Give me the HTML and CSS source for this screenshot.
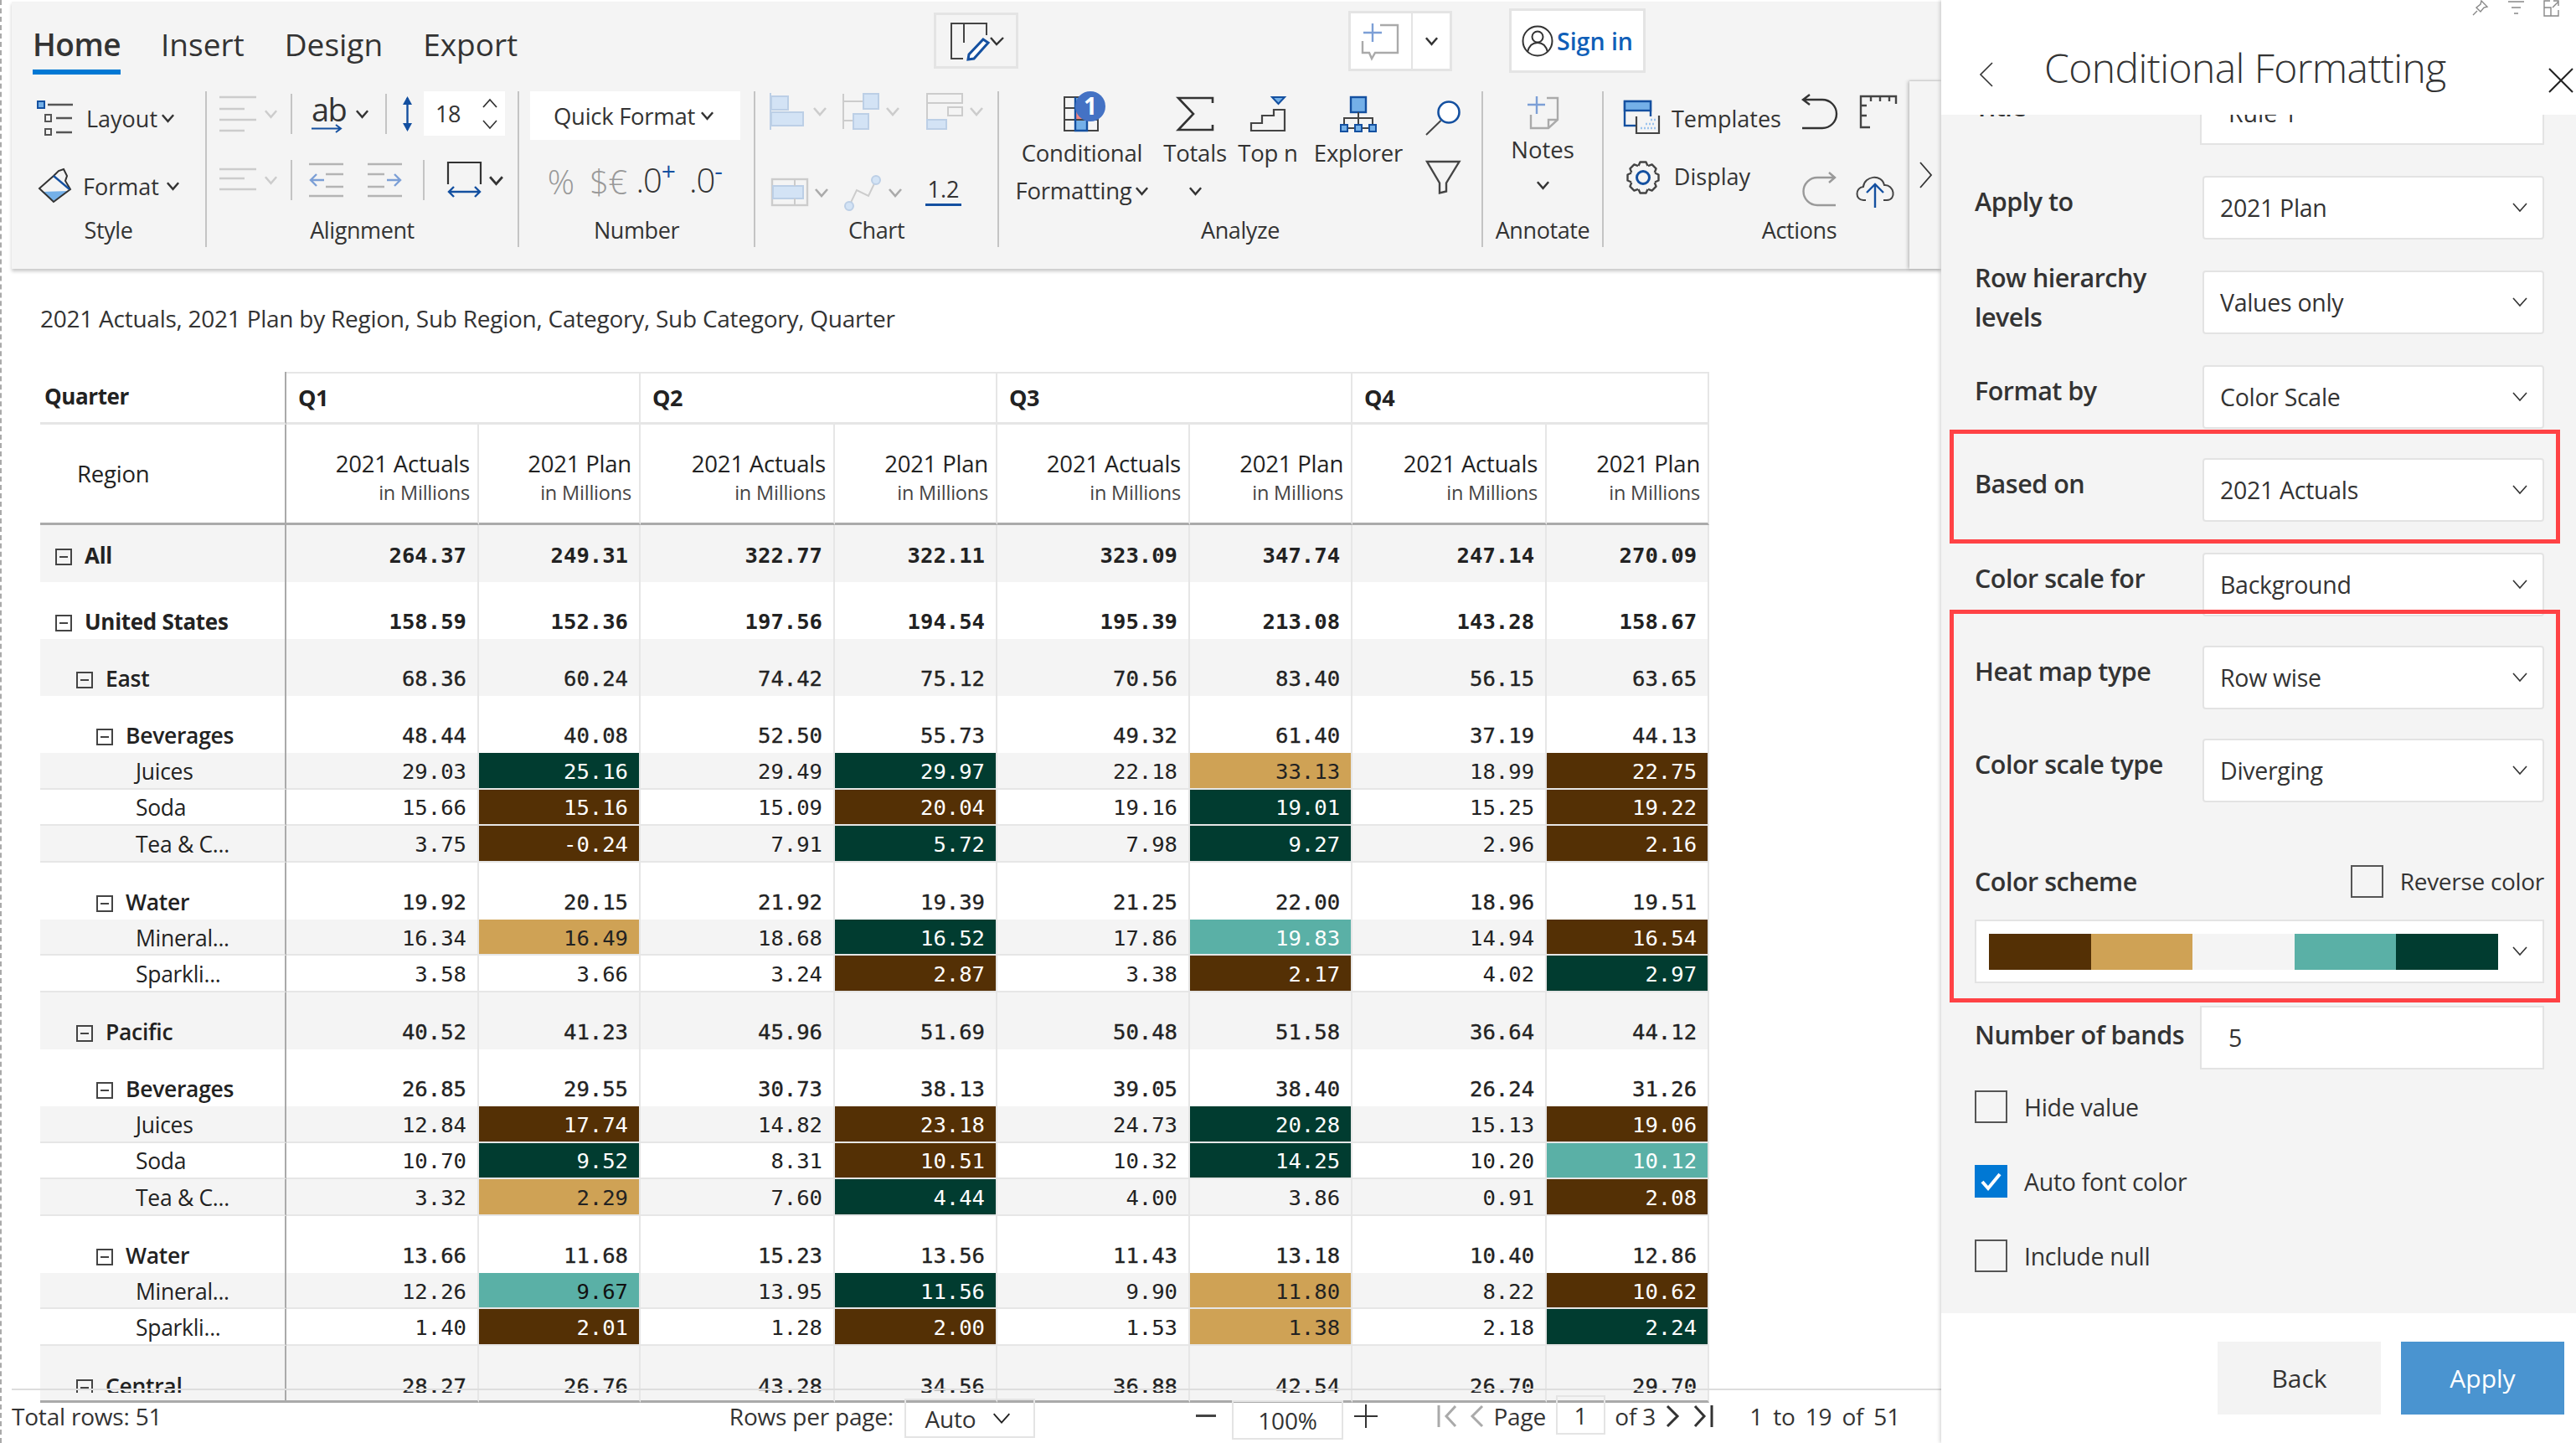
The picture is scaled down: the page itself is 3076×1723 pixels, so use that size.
FILE: index.html
```html
<!DOCTYPE html>
<html lang="en">
<head>
    <meta charset="UTF-8">
    <title>Conditional Formatting</title>
    <link rel="stylesheet" href="styles.css">
</head>
<body>
    <svg class="defs" width="0" height="0">
        <symbol id="chev" viewBox="0 0 18 12"><polyline points="2,2 9,10 16,2" fill="none" stroke="currentColor" stroke-width="2.6"/></symbol>
        <symbol id="chev-thin" viewBox="0 0 18 12"><polyline points="1,1 9,10 17,1" fill="none" stroke="currentColor" stroke-width="1.6"/></symbol>
        <symbol id="gear" viewBox="0 0 40 40">
            <g fill="none" stroke="#444" stroke-width="2.4" stroke-linejoin="round" transform="translate(20 20)">
                <polyline id="tooth" points="-5.5,-14 -3.5,-18.5 3.5,-18.5 5.5,-14"/>
                <use href="#tooth" transform="rotate(45)"/><use href="#tooth" transform="rotate(90)"/><use href="#tooth" transform="rotate(135)"/>
                <use href="#tooth" transform="rotate(180)"/><use href="#tooth" transform="rotate(225)"/><use href="#tooth" transform="rotate(270)"/><use href="#tooth" transform="rotate(315)"/>
            </g>
            <circle cx="20" cy="20" r="7.5" fill="none" stroke="#1450a0" stroke-width="3"/>
        </symbol>
    </svg>

    <div class="main">
        <div class="ribbon">
            <div class="tab-row">
                <div class="tabs">
                    <div class="tab active">Home</div>
                    <div class="tab">Insert</div>
                    <div class="tab">Design</div>
                    <div class="tab">Export</div>
                </div>
                <div class="top-box edit-box">
                    <svg width="64" height="44" viewBox="0 0 64 44">
                        <path d="M15 43H1V1H43V15M16 1V24" fill="none" stroke="#444" stroke-width="2"/>
                        <path d="M39 20L45 24L28 43L21 44L22 38Z" fill="#fff" stroke="#1450a0" stroke-width="3"/>
                        <polyline points="48,18 55,26 63,18" fill="none" stroke="#333" stroke-width="2.4"/>
                    </svg>
                </div>
                <div class="top-box note-box">
                    <div class="note-icon">
                        <svg width="46" height="44" viewBox="0 0 46 44">
                            <path d="M22 3H43V36H16L12 43L9 36H1V22" fill="none" stroke="#aaa" stroke-width="2.4"/>
                            <path d="M2 12H24M13 1V23" fill="none" stroke="#7c9fd6" stroke-width="2.4"/>
                        </svg>
                    </div>
                    <div class="note-more"><svg class="chev" width="17" height="12"><use href="#chev"/></svg></div>
                </div>
                <div class="top-box sign-box">
                    <svg width="38" height="40" viewBox="0 0 38 40">
                        <circle cx="19" cy="20" r="17.5" fill="none" stroke="#333" stroke-width="2"/>
                        <circle cx="19" cy="15" r="6.5" fill="none" stroke="#333" stroke-width="2"/>
                        <path d="M7 33C9 25 14 22 19 22C24 22 29 25 31 33" fill="none" stroke="#333" stroke-width="2"/>
                    </svg>
                    <span>Sign in</span>
                </div>
            </div>

            <div class="groups">
                <div class="group style-group">
                    <div class="group-body">
                        <div class="tool-line">
                            <svg width="44" height="42" viewBox="0 0 44 42">
                                <rect x="1" y="1" width="8" height="8" fill="#74b0e8" stroke="#1450a0" stroke-width="2"/>
                                <rect x="10" y="17" width="7" height="8" fill="none" stroke="#555" stroke-width="2"/>
                                <rect x="10" y="34" width="7" height="7" fill="none" stroke="#555" stroke-width="2"/>
                                <path d="M13 5H43M23 21H42M23 38H42" stroke="#555" stroke-width="2.4"/>
                            </svg>
                            <span class="tool-text">Layout</span>
                            <svg class="chev" width="17" height="12"><use href="#chev"/></svg>
                        </div>
                        <div class="tool-line format-line">
                            <svg width="40" height="40" viewBox="0 0 40 40">
                                <polygon points="4,27 36,26 18,38" fill="#74b0e8"/>
                                <polygon points="1,23 18,8 24,2 30,0 34,8 32,14 38,24 18,39" fill="none" stroke="#333" stroke-width="2"/>
                                <path d="M18 8L37 24" stroke="#1450a0" stroke-width="2.4"/>
                            </svg>
                            <span class="tool-text">Format</span>
                            <svg class="chev" width="17" height="12"><use href="#chev"/></svg>
                        </div>
                    </div>
                    <div class="group-label">Style</div>
                </div>

                <div class="group align-group">
                    <div class="group-body">
                        <div class="tracks align-top">
                            <svg width="44" height="44" viewBox="0 0 44 44"><path d="M0 2H44M0 16H30M0 29H44M0 42H30" stroke="#ccc" stroke-width="2.6"/></svg>
                            <svg class="chev off" width="17" height="12"><use href="#chev"/></svg>
                            <i class="vsep"></i>
                            <div class="ab-tool"><span>ab</span><svg width="36" height="9" viewBox="0 0 36 9"><path d="M0 4.5H34M29 0L35 4.5L29 9" fill="none" stroke="#1450a0" stroke-width="2"/></svg></div>
                            <svg class="chev" width="17" height="12"><use href="#chev"/></svg>
                            <i class="vsep"></i>
                            <svg width="13" height="42" viewBox="0 0 13 42"><path d="M6.5 2V40" stroke="#1450a0" stroke-width="2.4"/><path d="M6.5 0L12 10H1ZM6.5 42L12 32H1Z" fill="#1450a0"/></svg>
                            <div class="spin">
                                <span>18</span>
                                <div class="spin-arrows">
                                    <svg width="20" height="12" viewBox="0 0 18 12"><polyline points="1,11 9,2 17,11" fill="none" stroke="#333" stroke-width="1.8"/></svg>
                                    <svg width="20" height="12"><use href="#chev-thin" color="#333"/></svg>
                                </div>
                            </div>
                        </div>
                        <div class="tracks align-bottom">
                            <svg width="44" height="30" viewBox="0 0 44 30"><path d="M0 2H44M0 13H30M0 26H44" stroke="#ccc" stroke-width="2.6"/></svg>
                            <svg class="chev off" width="17" height="12"><use href="#chev"/></svg>
                            <i class="vsep"></i>
                            <svg width="41" height="42" viewBox="0 0 41 42"><path d="M0 2H41M0 40H41M20 14H41M20 29H41" stroke="#b4b4b4" stroke-width="2.6"/><path d="M2 21H18M9 14L2 21L9 28" fill="none" stroke="#7c9fd6" stroke-width="2.4"/></svg>
                            <svg width="41" height="42" viewBox="0 0 41 42"><path d="M0 2H41M0 40H41M0 14H20M0 29H20" stroke="#b4b4b4" stroke-width="2.6"/><path d="M23 21H39M32 14L39 21L32 28" fill="none" stroke="#7c9fd6" stroke-width="2.4"/></svg>
                            <i class="vsep"></i>
                            <svg width="41" height="44" viewBox="0 0 41 44"><path d="M1 27V1H40V27" fill="none" stroke="#333" stroke-width="2.2"/><path d="M2 36H39M8 30L2 36L8 42M33 30L39 36L33 42" fill="none" stroke="#1450a0" stroke-width="2.4"/></svg>
                            <svg class="chev" width="19" height="13"><use href="#chev"/></svg>
                        </div>
                    </div>
                    <div class="group-label">Alignment</div>
                </div>

                <div class="group number-group">
                    <div class="group-body">
                        <div class="quick-format"><span>Quick Format</span><svg class="chev" width="17" height="12"><use href="#chev"/></svg></div>
                        <div class="tracks number-tools">
                            <span class="num-off">%</span>
                            <span class="num-off">$€</span>
                            <span class="num-dec">.0<b>+</b></span>
                            <span class="num-dec">.0<b>-</b></span>
                        </div>
                    </div>
                    <div class="group-label number-label">Number</div>
                </div>

                <div class="group chart-group">
                    <div class="group-body">
                        <div class="tracks chart-top">
                            <svg width="41" height="44" viewBox="0 0 41 44"><path d="M1 0V44" stroke="#bccfe6" stroke-width="2"/><rect x="2" y="4" width="20" height="16" fill="#d3e3f5" stroke="#bccfe6" stroke-width="2"/><rect x="2" y="23" width="38" height="16" fill="#d3e3f5" stroke="#bccfe6" stroke-width="2"/></svg>
                            <svg class="chev off" width="18" height="12"><use href="#chev"/></svg>
                            <svg width="44" height="44" viewBox="0 0 44 44"><path d="M1 1V43M1 10H25M1 33H13" stroke="#ccc" stroke-width="2"/><rect x="25" y="1" width="18" height="18" fill="#d3e3f5" stroke="#bccfe6" stroke-width="2"/><rect x="13" y="25" width="18" height="18" fill="#d3e3f5" stroke="#bccfe6" stroke-width="2"/></svg>
                            <svg class="chev off" width="18" height="12"><use href="#chev"/></svg>
                            <svg width="44" height="44" viewBox="0 0 44 44"><rect x="1" y="1" width="42" height="11" fill="none" stroke="#ccc" stroke-width="2"/><path d="M1 12V33" stroke="#ccc" stroke-width="2"/><rect x="26" y="17" width="17" height="10" fill="none" stroke="#ccc" stroke-width="2"/><rect x="1" y="32" width="23" height="11" fill="#d3e3f5" stroke="#bccfe6" stroke-width="2"/></svg>
                            <svg class="chev off" width="18" height="12"><use href="#chev"/></svg>
                        </div>
                        <div class="tracks chart-bottom">
                            <svg width="44" height="44" viewBox="0 0 44 44"><rect x="1" y="6" width="42" height="31" fill="none" stroke="#ccc" stroke-width="2.4"/><rect x="2" y="14" width="36" height="15" fill="#d3e3f5" stroke="#bccfe6" stroke-width="2"/><path d="M28 6V14M28 29V37" stroke="#ccc" stroke-width="2"/></svg>
                            <svg class="chev grey" width="18" height="12"><use href="#chev"/></svg>
                            <svg width="44" height="44" viewBox="0 0 44 44"><polyline points="6,38 15,19 29,26 38,7" fill="none" stroke="#ccc" stroke-width="2"/><circle cx="6" cy="38" r="5" fill="#d3e3f5" stroke="#bccfe6" stroke-width="2"/><circle cx="38" cy="7" r="5" fill="#d3e3f5" stroke="#bccfe6" stroke-width="2"/></svg>
                            <svg class="chev grey" width="18" height="12"><use href="#chev"/></svg>
                            <span class="decimal">1.2</span>
                        </div>
                    </div>
                    <div class="group-label">Chart</div>
                </div>

                <div class="group analyze-group">
                    <div class="group-body analyze-tools">
                        <div class="big-tool">
                            <svg class="tool-icon" width="44" height="43" viewBox="0 0 44 43">
                                <rect x="14" y="1" width="14" height="13" fill="#74b0e8"/>
                                <rect x="14" y="14" width="14" height="14" fill="#f08484"/>
                                <rect x="14" y="28" width="14" height="13" fill="#74b0e8"/>
                                <path d="M1 1H41V41H1ZM1 14H41M1 28H41" fill="none" stroke="#444" stroke-width="2"/>
                                <path d="M14 1V41H28V1" fill="none" stroke="#1450a0" stroke-width="2.4"/>
                                <circle cx="32" cy="12" r="18" fill="#4472c4"/>
                                <text x="32" y="22" class="badge-text">1</text>
                            </svg>
                            <div>Conditional</div>
                            <div class="tool-more">Formatting<svg class="chev" width="17" height="12"><use href="#chev"/></svg></div>
                        </div>
                        <div class="big-tool">
                            <svg class="tool-icon" width="44" height="43" viewBox="0 0 44 43"><polyline points="43,8 43,2 2,2 20,21 2,40 43,40 43,34" fill="none" stroke="#333" stroke-width="2.6"/></svg>
                            <div>Totals</div>
                            <div class="tool-more"><svg class="chev" width="17" height="12"><use href="#chev"/></svg></div>
                        </div>
                        <div class="big-tool">
                            <svg class="tool-icon" width="42" height="43" viewBox="0 0 42 43"><polygon points="26,1 41,1 33.5,9" fill="#74b0e8" stroke="#1450a0" stroke-width="2"/><polygon points="1,32 14,32 14,23 28,23 28,16 41,16 41,41 1,41" fill="none" stroke="#444" stroke-width="2.2"/></svg>
                            <div>Top n</div>
                        </div>
                        <div class="big-tool">
                            <svg class="tool-icon" width="44" height="43" viewBox="0 0 44 43">
                                <rect x="13" y="1" width="18" height="18" fill="#74b0e8" stroke="#1450a0" stroke-width="2.4"/>
                                <path d="M22 19V34M5 34V26H39V34M5 38H39" fill="none" stroke="#444" stroke-width="2"/>
                                <rect x="1" y="34" width="8" height="8" fill="#74b0e8" stroke="#1450a0" stroke-width="2"/>
                                <rect x="18" y="34" width="8" height="8" fill="#74b0e8" stroke="#1450a0" stroke-width="2"/>
                                <rect x="35" y="34" width="8" height="8" fill="#74b0e8" stroke="#1450a0" stroke-width="2"/>
                            </svg>
                            <div>Explorer</div>
                        </div>
                        <div class="small-tools">
                            <svg width="42" height="42" viewBox="0 0 42 42"><circle cx="28" cy="14" r="12.5" fill="#fff" stroke="#1450a0" stroke-width="2.6"/><path d="M18.5 24L1 41" stroke="#444" stroke-width="2"/></svg>
                            <svg width="41" height="40" viewBox="0 0 41 40"><polygon points="1,1 39.5,1 24,26.5 24,36.5 16,38.5 16,26.5" fill="none" stroke="#444" stroke-width="2.4"/></svg>
                        </div>
                    </div>
                    <div class="group-label">Analyze</div>
                </div>

                <div class="group annotate-group">
                    <div class="group-body notes-tool">
                        <svg width="38" height="40" viewBox="0 0 38 40"><path d="M24 2H37V28L26 38H5V22M26 38V28H37" fill="none" stroke="#aaa" stroke-width="2.4"/><path d="M1 10H22M12 0V21" stroke="#7c9fd6" stroke-width="2.4"/></svg>
                        <div>Notes</div>
                        <svg class="chev notes-chev" width="17" height="12"><use href="#chev"/></svg>
                    </div>
                    <div class="group-label">Annotate</div>
                </div>

                <div class="group actions-group">
                    <div class="group-body">
                        <div class="tracks actions-top">
                            <svg width="44" height="40" viewBox="0 0 44 40">
                                <rect x="1" y="1" width="31" height="29" fill="none" stroke="#1450a0" stroke-width="2.4"/>
                                <rect x="1" y="1" width="31" height="11" fill="#74b0e8" stroke="#1450a0" stroke-width="2.4"/>
                                <path d="M15 39V19H42V39Z" fill="#f4f4f4"/>
                                <path d="M15 19V39H42V18" fill="none" stroke="#444" stroke-width="2.2"/>
                                <path d="M20 33H38M26 28H38M32 23H38" stroke="#9cc4ee" stroke-width="2.4" stroke-dasharray="2 2"/>
                            </svg>
                            <span class="tool-text">Templates</span>
                            <svg class="top-icon" width="42" height="41" viewBox="0 0 42 41"><path d="M10 0L2 6L10 12M2 6H25A17 17 0 0 1 25 40H1" fill="none" stroke="#333" stroke-width="2.4"/></svg>
                            <svg class="top-icon" width="45" height="41" viewBox="0 0 45 41"><path d="M44 11V2H2V39H13M14 2V8M25 2V8M36 2V8M2 13H9M2 25H9" fill="none" stroke="#444" stroke-width="2.4"/></svg>
                        </div>
                        <div class="tracks actions-bottom">
                            <svg class="top-icon" width="40" height="40"><use href="#gear"/></svg>
                            <span class="tool-text top-icon">Display</span>
                            <svg width="42" height="41" viewBox="0 0 42 41"><path d="M33 -1L40 5L33 11M40 5H19A16.5 16.5 0 0 0 19 38H41" fill="none" stroke="#999" stroke-width="2.4"/></svg>
                            <svg width="46" height="44" viewBox="0 0 46 44"><path d="M12 35H9C-1 35 -1 20 9 19C10 6 31 3 34 17C46 16 49 35 37 35H33" fill="none" stroke="#444" stroke-width="2"/><path d="M23 44V16M13 26L23 16L33 26" fill="none" stroke="#1450a0" stroke-width="2.4"/></svg>
                        </div>
                    </div>
                    <div class="group-label actions-label">Actions</div>
                </div>

                <div class="ribbon-more"><svg width="15" height="32" viewBox="0 0 15 32"><polyline points="1,1 14,16 1,31" fill="none" stroke="#333" stroke-width="1.8"/></svg></div>
            </div>
        </div>

        <div class="subtitle">2021 Actuals, 2021 Plan by Region, Sub Region, Category, Sub Category, Quarter</div>

        <table class="grid">
            <colgroup>
                <col class="c-label"><col class="c-a1"><col class="c-b1"><col class="c-a2"><col class="c-b2"><col class="c-a1"><col class="c-b2"><col class="c-a2"><col class="c-b2">
            </colgroup>
            <thead>
                <tr class="head-q">
                    <th class="first">Quarter</th><th colspan="2">Q1</th><th colspan="2">Q2</th><th colspan="2">Q3</th><th colspan="2">Q4</th>
                </tr>
                <tr class="head-m">
                    <th class="first region">Region</th>
                    <th>2021 Actuals<small>in Millions</small></th><th>2021 Plan<small>in Millions</small></th>
                    <th>2021 Actuals<small>in Millions</small></th><th>2021 Plan<small>in Millions</small></th>
                    <th>2021 Actuals<small>in Millions</small></th><th>2021 Plan<small>in Millions</small></th>
                    <th>2021 Actuals<small>in Millions</small></th><th>2021 Plan<small>in Millions</small></th>
                </tr>
            </thead>
            <tbody>
                <tr class="big alt total all"><td class="lv0"><i class="exp"></i>All</td><td>264.37</td><td>249.31</td><td>322.77</td><td>322.11</td><td>323.09</td><td>347.74</td><td>247.14</td><td>270.09</td></tr>
                <tr class="big total"><td class="lv0"><i class="exp"></i>United States</td><td>158.59</td><td>152.36</td><td>197.56</td><td>194.54</td><td>195.39</td><td>213.08</td><td>143.28</td><td>158.67</td></tr>
                <tr class="big alt sub"><td class="lv1"><i class="exp"></i>East</td><td>68.36</td><td>60.24</td><td>74.42</td><td>75.12</td><td>70.56</td><td>83.40</td><td>56.15</td><td>63.65</td></tr>
                <tr class="big sub"><td class="lv2"><i class="exp"></i>Beverages</td><td>48.44</td><td>40.08</td><td>52.50</td><td>55.73</td><td>49.32</td><td>61.40</td><td>37.19</td><td>44.13</td></tr>
                <tr class="small alt"><td class="leaf">Juices</td><td>29.03</td><td class="deep">25.16</td><td>29.49</td><td class="deep">29.97</td><td>22.18</td><td class="tan">33.13</td><td>18.99</td><td class="brown">22.75</td></tr>
                <tr class="small"><td class="leaf">Soda</td><td>15.66</td><td class="brown">15.16</td><td>15.09</td><td class="brown">20.04</td><td>19.16</td><td class="deep">19.01</td><td>15.25</td><td class="brown">19.22</td></tr>
                <tr class="small alt"><td class="leaf">Tea &amp; C...</td><td>3.75</td><td class="brown">-0.24</td><td>7.91</td><td class="deep">5.72</td><td>7.98</td><td class="deep">9.27</td><td>2.96</td><td class="brown">2.16</td></tr>
                <tr class="big sub"><td class="lv2"><i class="exp"></i>Water</td><td>19.92</td><td>20.15</td><td>21.92</td><td>19.39</td><td>21.25</td><td>22.00</td><td>18.96</td><td>19.51</td></tr>
                <tr class="small alt"><td class="leaf">Mineral...</td><td>16.34</td><td class="tan">16.49</td><td>18.68</td><td class="deep">16.52</td><td>17.86</td><td class="teal light">19.83</td><td>14.94</td><td class="brown">16.54</td></tr>
                <tr class="small"><td class="leaf">Sparkli...</td><td>3.58</td><td>3.66</td><td>3.24</td><td class="brown">2.87</td><td>3.38</td><td class="brown">2.17</td><td>4.02</td><td class="deep">2.97</td></tr>
                <tr class="big alt sub"><td class="lv1"><i class="exp"></i>Pacific</td><td>40.52</td><td>41.23</td><td>45.96</td><td>51.69</td><td>50.48</td><td>51.58</td><td>36.64</td><td>44.12</td></tr>
                <tr class="big sub"><td class="lv2"><i class="exp"></i>Beverages</td><td>26.85</td><td>29.55</td><td>30.73</td><td>38.13</td><td>39.05</td><td>38.40</td><td>26.24</td><td>31.26</td></tr>
                <tr class="small alt"><td class="leaf">Juices</td><td>12.84</td><td class="brown">17.74</td><td>14.82</td><td class="brown">23.18</td><td>24.73</td><td class="deep">20.28</td><td>15.13</td><td class="brown">19.06</td></tr>
                <tr class="small"><td class="leaf">Soda</td><td>10.70</td><td class="deep">9.52</td><td>8.31</td><td class="brown">10.51</td><td>10.32</td><td class="deep">14.25</td><td>10.20</td><td class="teal light">10.12</td></tr>
                <tr class="small alt"><td class="leaf">Tea &amp; C...</td><td>3.32</td><td class="tan">2.29</td><td>7.60</td><td class="deep">4.44</td><td>4.00</td><td>3.86</td><td>0.91</td><td class="brown">2.08</td></tr>
                <tr class="big sub"><td class="lv2"><i class="exp"></i>Water</td><td>13.66</td><td>11.68</td><td>15.23</td><td>13.56</td><td>11.43</td><td>13.18</td><td>10.40</td><td>12.86</td></tr>
                <tr class="small alt"><td class="leaf">Mineral...</td><td>12.26</td><td class="teal">9.67</td><td>13.95</td><td class="deep">11.56</td><td>9.90</td><td class="tan">11.80</td><td>8.22</td><td class="brown">10.62</td></tr>
                <tr class="small"><td class="leaf">Sparkli...</td><td>1.40</td><td class="brown">2.01</td><td>1.28</td><td class="brown">2.00</td><td>1.53</td><td class="tan">1.38</td><td>2.18</td><td class="deep">2.24</td></tr>
                <tr class="big alt sub last"><td class="lv1"><div class="clip"><i class="exp"></i>Central</div></td><td><div class="clip">28.27</div></td><td><div class="clip">26.76</div></td><td><div class="clip">43.28</div></td><td><div class="clip">34.56</div></td><td><div class="clip">36.88</div></td><td><div class="clip">42.54</div></td><td><div class="clip">26.70</div></td><td><div class="clip">29.70</div></td></tr>
            </tbody>
        </table>

        <div class="pager">
            <span class="total-rows">Total rows: 51</span>
            <span>Rows per page:</span>
            <div class="page-box rows-box"><span>Auto</span><svg width="30" height="14"><use href="#chev-thin" color="#222"/></svg></div>
            <svg width="24" height="4"><rect width="24" height="3" fill="#444"/></svg>
            <div class="page-box zoom-box">100%</div>
            <svg width="28" height="28" viewBox="0 0 28 28"><path d="M0 14H28M14 0V28" stroke="#333" stroke-width="2"/></svg>
            <svg width="24" height="26" viewBox="0 0 24 26"><path d="M2 0V26" stroke="#aaa" stroke-width="3"/><polyline points="22,1 11,13 22,25" fill="none" stroke="#aaa" stroke-width="3"/></svg>
            <svg width="15" height="26" viewBox="0 0 15 26"><polyline points="14,1 2,13 14,25" fill="none" stroke="#aaa" stroke-width="3"/></svg>
            <span>Page</span>
            <div class="page-box num-box">1</div>
            <span>of 3</span>
            <svg width="15" height="26" viewBox="0 0 15 26"><polyline points="1,1 13,13 1,25" fill="none" stroke="#333" stroke-width="3"/></svg>
            <svg width="24" height="26" viewBox="0 0 24 26"><polyline points="2,1 13,13 2,25" fill="none" stroke="#333" stroke-width="3"/><path d="M22 0V26" stroke="#333" stroke-width="3"/></svg>
            <span class="page-range">1 to 19 of 51</span>
        </div>
    </div>

    <div class="panel">
        <div class="panel-head">
            <div class="mini-icons">
                <svg width="20" height="19" viewBox="0 0 20 19"><path d="M11 1L18 8L14 9L10 14L5 9L10 5ZM6 13L1 18" fill="none" stroke="#888" stroke-width="1.4"/></svg>
                <svg width="19" height="18" viewBox="0 0 19 18"><path d="M0 2H19M4 9H15M7 16H12" stroke="#888" stroke-width="1.6"/></svg>
                <svg width="19" height="20" viewBox="0 0 19 20"><path d="M8 1H1V19H18V12M1 9H9V19M11 9L18 2M12 1H18V7" fill="none" stroke="#888" stroke-width="1.4"/></svg>
            </div>
            <div class="panel-title-row">
                <svg class="back" width="17" height="30" viewBox="0 0 17 30"><polyline points="16,1 2,15 16,29" fill="none" stroke="#333" stroke-width="1.6"/></svg>
                <div class="panel-title">Conditional Formatting</div>
                <svg class="close" width="30" height="30" viewBox="0 0 30 30"><path d="M1 1L29 29M29 1L1 29" stroke="#222" stroke-width="2"/></svg>
            </div>
        </div>

        <div class="panel-body">
            <div class="form-row first-row">
                <div class="form-label">Title</div>
                <div class="text-input">Rule 1</div>
            </div>
            <div class="form-row">
                <div class="form-label">Apply to</div>
                <div class="select"><span>2021 Plan</span><svg width="18" height="12"><use href="#chev-thin"/></svg></div>
            </div>
            <div class="form-row">
                <div class="form-label tall">Row hierarchy levels</div>
                <div class="select"><span>Values only</span><svg width="18" height="12"><use href="#chev-thin"/></svg></div>
            </div>
            <div class="form-row">
                <div class="form-label">Format by</div>
                <div class="select"><span>Color Scale</span><svg width="18" height="12"><use href="#chev-thin"/></svg></div>
            </div>

            <div class="callout callout-based">
                <div class="form-row">
                    <div class="form-label">Based on</div>
                    <div class="select"><span>2021 Actuals</span><svg width="18" height="12"><use href="#chev-thin"/></svg></div>
                </div>
            </div>

            <div class="form-row after-based">
                <div class="form-label">Color scale for</div>
                <div class="select"><span>Background</span><svg width="18" height="12"><use href="#chev-thin"/></svg></div>
            </div>

            <div class="callout callout-heat">
                <div class="form-row">
                    <div class="form-label">Heat map type</div>
                    <div class="select"><span>Row wise</span><svg width="18" height="12"><use href="#chev-thin"/></svg></div>
                </div>
                <div class="form-row">
                    <div class="form-label">Color scale type</div>
                    <div class="select"><span>Diverging</span><svg width="18" height="12"><use href="#chev-thin"/></svg></div>
                </div>
                <div class="scheme-head">
                    <div class="form-label">Color scheme</div>
                    <label class="check reverse"><i class="box"></i>Reverse color</label>
                </div>
                <div class="scheme">
                    <div class="swatches">
                        <i class="brown"></i><i class="tan"></i><i class="mid"></i><i class="teal"></i><i class="deep"></i>
                    </div>
                    <svg width="18" height="12"><use href="#chev-thin"/></svg>
                </div>
            </div>

            <div class="form-row bands-row">
                <div class="form-label">Number of bands</div>
                <div class="text-input">5</div>
            </div>
            <div class="checks">
                <label class="check"><i class="box"></i>Hide value</label>
                <label class="check"><i class="box on"><svg width="25" height="22" viewBox="0 0 25 22"><polyline points="2,11 9,19 23,2" fill="none" stroke="#fff" stroke-width="4"/></svg></i>Auto font color</label>
                <label class="check"><i class="box"></i>Include null</label>
            </div>
        </div>

        <div class="panel-foot">
            <div class="btn btn-back">Back</div>
            <div class="btn btn-apply">Apply</div>
        </div>
    </div>
</body>
</html>
```

FILE: styles.css
```css
* {
    box-sizing: border-box;
}
html, body {
    margin: 0;
    height: 100%;
}
body {
    width: 3076px;
    height: 1723px;
    overflow: hidden;
    display: flex;
    background: #fff;
    font-family: "Open Sans", "Noto Sans", sans-serif;
    font-size: 26px;
    color: #333;
}
svg {
    display: block;
    overflow: visible;
    flex: none;
}
.defs {
    position: absolute;
}
.chev {
    color: #333;
}
.chev.off {
    color: #ccc;
}
.chev.grey {
    color: #aaa;
}

/* left side */
.main {
    width: 2318px;
    height: 1723px;
    flex: none;
    overflow: hidden;
    border-left: 2px dashed #aaa;
}

/* ribbon */
.ribbon {
    margin: 2px 0 0 12px;
    height: 319px;
    background: #f4f4f4;
    box-shadow: 0 3px 4px rgba(0, 0, 0, 0.22);
}
.tab-row {
    display: flex;
    align-items: flex-start;
    height: 107px;
    padding-left: 25px;
}
.tabs {
    display: flex;
    gap: 48px;
    width: 1076px;
    flex: none;
}
.tab {
    height: 87px;
    padding-top: 22px;
    line-height: 58px;
    font-size: 37px;
    border-bottom: 6px solid transparent;
}
.tab.active {
    font-weight: 600;
    letter-spacing: -0.5px;
    border-bottom-color: #0078d4;
}
.top-box {
    display: flex;
    align-items: center;
    background: #fff;
    border: 3px solid #e4e4e4;
}
.edit-box {
    width: 101px;
    height: 67px;
    margin-top: 13px;
    padding-left: 17px;
    background: transparent;
}
.note-box {
    width: 124px;
    height: 72px;
    margin: 11px 0 0 394px;
}
.note-icon {
    width: 74px;
    padding-left: 13px;
    border-right: 2px solid #e4e4e4;
    height: 100%;
    display: flex;
    align-items: center;
}
.note-more {
    flex: 1;
    display: flex;
    justify-content: center;
}
.sign-box {
    width: 163px;
    height: 77px;
    margin: 8px 0 0 68px;
    padding-left: 12px;
    gap: 4px;
    font-size: 28.5px;
    font-weight: 600;
    color: #0f5fb8;
}

.groups {
    display: flex;
    align-items: flex-start;
}
.group {
    height: 186px;
    display: flex;
    flex-direction: column;
    border-right: 2px solid #c4c4c4;
    flex: none;
}
.group-body {
    height: 148px;
}
.group-label {
    height: 38px;
    line-height: 36px;
    text-align: center;
    font-size: 27px;
    letter-spacing: -0.4px;
}
.tracks {
    display: grid;
    justify-items: end;
    align-items: center;
}
.vsep {
    display: block;
    width: 2px;
    height: 48px;
    background: #c4c4c4;
}
.tool-text {
    font-size: 27px;
    white-space: nowrap;
}

.style-group {
    width: 233px;
}
.style-group .group-body {
    padding: 11px 0 0 30px;
}
.tool-line {
    display: flex;
    align-items: center;
    gap: 15px;
    height: 42px;
}
.tool-line .chev {
    margin-left: -11px;
}
.format-line {
    margin: 39px 0 0 2px;
    gap: 13px;
}
.format-line .chev {
    margin-left: -5px;
}

.align-group {
    width: 373px;
}
.align-top {
    height: 53px;
    grid-template-columns: 59px 26px 17px 59px 33px 21px 31px 110px;
}
.align-bottom {
    height: 50px;
    margin-top: 28px;
    grid-template-columns: 59px 26px 17px 61px 70px 27px 68px 27px;
}
.ab-tool {
    width: 36px;
    font-size: 38px;
    line-height: 34px;
    letter-spacing: -1.5px;
}
.ab-tool span {
    display: block;
    height: 36px;
}
.spin {
    width: 97px;
    height: 53px;
    background: #fff;
    display: flex;
    align-items: center;
    justify-content: space-between;
    padding: 0 8px 0 14px;
    font-size: 27px;
    letter-spacing: -0.5px;
}
.spin-arrows {
    display: flex;
    flex-direction: column;
    gap: 14px;
}

.number-group {
    width: 282px;
    padding-left: 13px;
}
.number-label {
    margin-left: -13px;
}
.quick-format {
    width: 251px;
    height: 58px;
    background: #fff;
    display: flex;
    align-items: center;
    padding-left: 28px;
    gap: 6px;
    font-size: 27.5px;
    letter-spacing: -0.3px;
}
.number-tools {
    height: 42px;
    margin: 27px 0 0 -13px;
    grid-template-columns: 65px 63px 58px 56px;
}
.num-off {
    font-size: 40px;
    line-height: 42px;
    font-weight: 300;
    color: #999;
    letter-spacing: -1px;
}
.num-dec {
    font-size: 40px;
    line-height: 42px;
    font-weight: 300;
    color: #333;
    letter-spacing: -1px;
}
.num-dec b {
    position: relative;
    top: -15px;
    font-size: 30px;
    color: #1450a0;
}
.chart-group {
    width: 291px;
    padding-top: 2px;
}
.chart-top {
    grid-template-columns: 58px 28px 62px 25px 75px 25px;
}
.chart-bottom {
    margin-top: 53px;
    grid-template-columns: 63px 25px 62px 26px 70px;
}
.chart-group .group-label {
    margin-top: -2px;
}
.decimal {
    width: 43px;
    margin-top: -5px;
    text-align: center;
    font-size: 27px;
    font-weight: 500;
    line-height: 34px;
    border-bottom: 3px solid #1450a0;
}

.analyze-group {
    width: 578px;
}
.analyze-tools {
    display: grid;
    grid-template-columns: 198px 72px 102px 114px 88px;
    padding-top: 6px;
}
.big-tool {
    display: flex;
    flex-direction: column;
    align-items: center;
    line-height: 45px;
    font-size: 27.5px;
    letter-spacing: -0.2px;
    white-space: nowrap;
}
.big-tool .tool-icon {
    margin-bottom: 2px;
}
.tool-more {
    display: flex;
    align-items: center;
    height: 45px;
    gap: 3px;
}
.badge-text {
    font-family: "Open Sans", sans-serif;
    font-size: 28px;
    font-weight: 700;
    fill: #fff;
    text-anchor: middle;
}
.small-tools {
    display: flex;
    flex-direction: column;
    align-items: center;
    padding-top: 5px;
    gap: 30px;
}

.annotate-group {
    width: 144px;
}
.notes-tool {
    display: flex;
    flex-direction: column;
    align-items: center;
    padding: 6px 0 0 0;
    line-height: 45px;
    font-size: 27.5px;
}
.notes-tool svg:first-child {
    margin-bottom: 1px;
}
.notes-chev {
    margin-top: 14px;
}

.actions-group {
    width: 365px;
    border-right: 0;
}
.actions-top {
    height: 47px;
    margin-top: 4px;
    align-items: end;
    grid-template-columns: 68px 144px 66px 72px;
}
.actions-bottom {
    height: 56px;
    margin-top: 32px;
    align-items: end;
    grid-template-columns: 67px 108px 103px 69px;
}
.top-icon {
    align-self: start;
}
.actions-top .top-icon {
    align-self: start;
}
.actions-label {
    padding-left: 102px;
}
.ribbon-more {
    width: 38px;
    height: 224px;
    margin-top: -12px;
    background: #f4f4f4;
    box-shadow: -2px 0 4px rgba(0, 0, 0, 0.2), 0 -1px 2px rgba(0, 0, 0, 0.1);
    display: flex;
    align-items: center;
    justify-content: center;
}

.subtitle {
    margin: 39px 0 44px 46px;
    height: 40px;
    line-height: 40px;
    font-size: 28px;
    letter-spacing: -0.25px;
    white-space: nowrap;
}

/* table */
.grid {
    margin-left: 46px;
    width: 1993px;
    table-layout: fixed;
    border-collapse: separate;
    border-spacing: 0;
    color: #222;
}
.c-label { width: 294px; }
.c-a1 { width: 230px; }
.c-b1 { width: 193px; }
.c-a2 { width: 232px; }
.c-b2 { width: 194px; }

.grid th {
    font-weight: 400;
    border-right: 2px solid #e6e6e6;
    padding: 0;
}
.grid th.first {
    border-right-color: #aaa;
}
.head-q th {
    height: 63px;
    text-align: left;
    padding-left: 14px;
    padding-bottom: 2px;
    font-size: 27px;
    font-weight: 700;
    letter-spacing: -0.4px;
    border-top: 2px solid #e6e6e6;
    border-bottom: 3px solid #e6e6e6;
}
.head-q th.first {
    border-top: 0;
    padding-left: 5px;
    font-size: 26px;
}
.head-m th {
    height: 120px;
    text-align: right;
    padding-right: 9px;
    padding-top: 9px;
    font-size: 27.5px;
    letter-spacing: -0.2px;
    line-height: 36px;
    border-bottom: 3px solid #aaa;
}
.head-m small {
    display: block;
    font-size: 23.5px;
    line-height: 32px;
    color: #444;
}
.head-m th.region {
    text-align: left;
    padding-left: 44px;
    padding-top: 1px;
}
.grid td {
    padding: 0 13px 0 0;
    text-align: right;
    font-family: "DejaVu Sans Mono", monospace;
    font-size: 25.6px;
    line-height: 30px;
    border-right: 2px solid #e6e6e6;
    white-space: nowrap;
}
.grid td:first-child {
    text-align: left;
    font-family: "Open Sans", sans-serif;
    font-size: 26.5px;
    letter-spacing: -0.3px;
    padding-right: 0;
    border-right-color: #aaa;
}
.big td {
    height: 68px;
    vertical-align: bottom;
    padding-bottom: 6px;
}
.small td {
    height: 43.6px;
    border-bottom: 2px solid #e6e6e6;
    vertical-align: middle;
    padding-top: 2px;
}
.alt td {
    background: #f4f4f4;
}
.total td {
    font-weight: 700;
}
.all td {
    vertical-align: middle;
    padding-bottom: 0;
    padding-top: 3px;
}
.sub td {
    -webkit-text-stroke: 0.35px #222;
}
.sub td:first-child {
    font-weight: 600;
    -webkit-text-stroke: 0;
}
.total td:first-child {
    font-weight: 700;
    font-size: 26px;
}
.last td {
    border-bottom: 3px solid #aaa;
    vertical-align: top;
    padding-top: 33px;
    padding-bottom: 0;
}
.clip {
    height: 23px;
    overflow: hidden;
}
.lv0 { padding-left: 18px !important; }
.lv1 { padding-left: 43px !important; }
.lv2 { padding-left: 67px !important; }
.leaf { padding-left: 114px !important; }
.exp {
    display: inline-block;
    position: relative;
    width: 20px;
    height: 20px;
    margin-right: 15px;
    border: 2px solid #444;
    vertical-align: -2px;
    -webkit-text-stroke: 0;
}
.exp::after {
    content: "";
    position: absolute;
    left: 3px;
    right: 3px;
    top: 7px;
    height: 2px;
    background: #444;
}
.grid td.deep { background: #013c30; color: #fff; }
.grid td.brown { background: #543005; color: #fff; }
.grid td.tan { background: #cfa255; color: #222; }
.grid td.teal { background: #5ab0a6; color: #111; }
.grid td.teal.light { color: #fff; }

/* pager */
.pager {
    position: relative;
    margin: -17px 0 0 12px;
    height: 62px;
    padding-top: 2px;
    border-top: 2px solid #ddd;
    display: grid;
    justify-items: end;
    align-items: center;
    grid-template-columns: 173px 880px 169px 216px 152px 41px 95px 31px 75px 71px 60px 28px 41px 223px;
    font-size: 28px;
    letter-spacing: -0.2px;
    white-space: nowrap;
}
.total-rows {
    justify-self: start;
}
.page-range {
    word-spacing: 5px;
}
.page-box {
    height: 47px;
    border: 2px solid #e4e4e4;
    display: flex;
    align-items: center;
    justify-content: center;
}
.rows-box {
    width: 156px;
    margin-top: 6px;
    gap: 16px;
}
.zoom-box {
    width: 133px;
    margin-top: 10px;
}
.num-box {
    width: 59px;
    margin-top: -2px;
}

/* side panel */
.panel {
    width: 758px;
    height: 1723px;
    flex: none;
    display: flex;
    flex-direction: column;
    position: relative;
    box-shadow: -2px 0 4px rgba(0, 0, 0, 0.15);
}
.panel-head {
    height: 137px;
    flex: none;
    position: relative;
    z-index: 1;
    background: #fff;
}
.mini-icons {
    display: flex;
    justify-content: flex-end;
    gap: 23px;
    height: 20px;
    padding-right: 20px;
}
.panel-title-row {
    display: flex;
    align-items: center;
    height: 84px;
    margin-top: 18px;
    padding-left: 45px;
}
.back {
    margin-top: 18px;
}
.panel-title {
    margin-left: 61px;
    font-size: 48px;
    font-weight: 300;
    letter-spacing: -0.6px;
    width: 583px;
    white-space: nowrap;
}
.close {
    margin: 32px 0 0 19px;
}
.panel-body {
    height: 1431px;
    flex: none;
    overflow: hidden;
    background: #f4f4f4;
    padding: 0 38px 0 40px;
}
.form-row {
    display: flex;
    align-items: center;
    justify-content: space-between;
    height: 76px;
    margin-bottom: 37px;
}
.first-row {
    margin-top: -40px;
}
.form-label {
    width: 262px;
    margin-bottom: 15px;
    font-size: 30.5px;
    font-weight: 600;
    letter-spacing: -0.5px;
    line-height: 47px;
    white-space: nowrap;
}
.form-label.tall {
    white-space: normal;
    margin-top: -25px;
    margin-bottom: -13px;
    width: 262px;
}
.select {
    width: 408px;
    height: 76px;
    flex: none;
    display: flex;
    align-items: center;
    justify-content: space-between;
    padding: 0 18px 0 19px;
    background: #fff;
    border: 2px solid #e3e3e3;
    border-radius: 4px;
    font-size: 28.5px;
    letter-spacing: -0.3px;
}
.text-input {
    width: 411px;
    height: 76px;
    flex: none;
    display: flex;
    align-items: center;
    padding-left: 32px;
    background: #fff;
    border: 2px solid #e3e3e3;
    font-size: 28.5px;
}
.callout {
    margin: 0 -19px 0 -30px;
    padding: 0 14px 0 25px;
    border: 5px solid #ff4245;
    position: relative;
    z-index: 1;
}
.callout-based {
    height: 136px;
    margin-top: -36px;
    padding-top: 29px;
}
.callout-heat {
    height: 469px;
    margin-top: -45px;
    padding-top: 38px;
}
.callout-heat .form-row {
    margin-bottom: 35px;
}
.after-based {
    margin-top: 11px;
}
.scheme-head {
    display: flex;
    align-items: center;
    justify-content: space-between;
    height: 40px;
    margin-top: 74px;
}
.scheme-head .form-label {
    margin-bottom: 0;
}
.check {
    display: flex;
    align-items: center;
    gap: 20px;
    font-size: 28.5px;
    letter-spacing: -0.3px;
    white-space: nowrap;
}
.check.reverse {
    font-size: 28px;
}
.box {
    display: flex;
    align-items: center;
    justify-content: center;
    width: 39px;
    height: 39px;
    border: 2px solid #555;
    background: transparent;
}
.box.on {
    background: #0078d4;
    border-color: #0078d4;
}
.scheme {
    display: flex;
    align-items: center;
    justify-content: space-between;
    height: 76px;
    margin-top: 26px;
    padding: 0 18px 0 15px;
    background: #fff;
    border: 2px solid #e3e3e3;
}
.swatches {
    display: flex;
}
.swatches i {
    display: block;
    width: 121.5px;
    height: 43px;
}
.swatches .brown { background: #543005; }
.swatches .tan { background: #cfa255; }
.swatches .mid { background: #f4f4f4; }
.swatches .teal { background: #5ab0a6; }
.swatches .deep { background: #013c30; }
.bands-row {
    height: 77px;
    margin: 3px 0 25px;
}
.bands-row .form-label {
    margin-bottom: 6px;
}
.checks {
    display: flex;
    flex-direction: column;
    gap: 50px;
}
.panel-foot {
    flex: 1;
    background: #fff;
    display: flex;
    justify-content: flex-end;
    gap: 24px;
    padding: 34px 14px 0 0;
}
.btn {
    width: 195px;
    height: 87px;
    line-height: 87px;
    text-align: center;
    font-size: 30px;
    font-weight: 500;
}
.btn-back {
    background: #f3f3f3;
    color: #333;
}
.btn-apply {
    background: #4a94d0;
    color: #fff;
}
```
